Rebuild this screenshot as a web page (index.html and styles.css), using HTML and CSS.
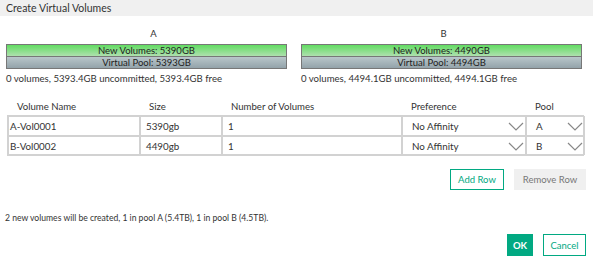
FILE: index.html
```html
<!DOCTYPE html>
<html>
<head>
<meta charset="utf-8">
<link rel="stylesheet" href="styles.css">
</head>
<body>
<div class="dialog">
  <div class="title">Create Virtual Volumes</div>
  <div class="pools">
    <div class="pool">
      <div class="pool-label">A</div>
      <div class="bar">
        <div class="seg seg-new">New Volumes: 5390GB</div>
        <div class="seg seg-pool">Virtual Pool: 5393GB</div>
      </div>
      <div class="pool-info">0 volumes, 5393.4GB uncommitted, 5393.4GB free</div>
    </div>
    <div class="pool pool-b">
      <div class="pool-label">B</div>
      <div class="bar">
        <div class="seg seg-new">New Volumes: 4490GB</div>
        <div class="seg seg-pool">Virtual Pool: 4494GB</div>
      </div>
      <div class="pool-info">0 volumes, 4494.1GB uncommitted, 4494.1GB free</div>
    </div>
  </div>
  <div class="table-head">
    <div>Volume Name</div>
    <div>Size</div>
    <div>Number of Volumes</div>
    <div>Preference</div>
    <div>Pool</div>
  </div>
  <div class="table-body">
    <div class="cell cell-name">A-Vol0001</div>
    <div class="cell">5390gb</div>
    <div class="cell">1</div>
    <div class="cell cell-select">No Affinity<svg class="chev" viewBox="0 0 16 9"><path d="M1 1 L8 8 L15 1"/></svg></div>
    <div class="cell cell-select">A<svg class="chev" viewBox="0 0 16 9"><path d="M1 1 L8 8 L15 1"/></svg></div>
    <div class="cell cell-name">B-Vol0002</div>
    <div class="cell">4490gb</div>
    <div class="cell">1</div>
    <div class="cell cell-select">No Affinity<svg class="chev" viewBox="0 0 16 9"><path d="M1 1 L8 8 L15 1"/></svg></div>
    <div class="cell cell-select">B<svg class="chev" viewBox="0 0 16 9"><path d="M1 1 L8 8 L15 1"/></svg></div>
  </div>
  <div class="row-actions">
    <button class="btn btn-outline btn-add">Add Row</button>
    <button class="btn btn-disabled btn-remove">Remove Row</button>
  </div>
  <div class="summary">2 new volumes will be created, 1 in pool A (5.4TB), 1 in pool B (4.5TB).</div>
  <div class="footer">
    <button class="btn btn-primary btn-ok">OK</button>
    <button class="btn btn-outline btn-cancel">Cancel</button>
  </div>
</div>
</body>
</html>
```
FILE: styles.css
```css
html, body {
  margin: 0;
  padding: 0;
  background: #fff;
}
body {
  font-family: Lato, "Open Sans", sans-serif;
  font-size: 9px;
  color: #333;
}
.title {
  height: 16px;
  line-height: 16px;
  background: #f0f0f0;
  padding-left: 6px;
  font-size: 10.5px;
  color: #333;
}
.pools {
  display: grid;
  grid-template-columns: 295px 281px;
  padding-left: 6px;
  margin-top: 12px;
}
.pool-label {
  height: 12px;
  line-height: 12px;
  text-align: center;
  width: 295px;
  font-size: 9.5px;
}
.pool-b .pool-label {
  width: 285px;
}
.bar {
  width: 279px;
  border: 1px solid #777;
  margin-top: 4px;
}
.seg {
  height: 11px;
  line-height: 11px;
  text-align: center;
  font-size: 9.5px;
  color: #222;
}
.seg-new {
  background: linear-gradient(#62dc62, #aee0ae);
  border-bottom: 1px solid #777;
}
.seg-pool {
  background: linear-gradient(#b9c6ca, #93a3aa);
}
.pool-info {
  margin-top: 4px;
  height: 12px;
  line-height: 12px;
  font-size: 9.6px;
  white-space: nowrap;
}
.table-head {
  display: grid;
  grid-template-columns: 132px 82px 180px 124px 59px;
  margin: 16px 0 0 7px;
  height: 12px;
  line-height: 12px;
  font-size: 9.6px;
}
.table-head div {
  padding-left: 10px;
}
.table-body {
  display: grid;
  grid-template-columns: 132px 82px 180px 124px 59px;
  margin: 2px 0 0 7px;
  width: 577px;
  box-sizing: border-box;
  border: 1px solid #d2d2d2;
  font-size: 9.8px;
}
.cell {
  border: 1px solid #d2d2d2;
  line-height: 18px;
  padding-left: 5px;
  box-sizing: border-box;
  height: 19.5px;
  position: relative;
  white-space: nowrap;
}
.cell-name {
  padding-left: 1px;
}
.cell-select {
  padding-left: 9px;
}
.chev {
  position: absolute;
  right: 1px;
  top: 5px;
  width: 16px;
  height: 9px;
  fill: none;
  stroke: #888;
  stroke-width: 1.2;
}
.row-actions {
  display: flex;
  justify-content: flex-end;
  gap: 10px;
  margin: 13px 7px 0 0;
}
.btn {
  font-family: inherit;
  font-size: 9.5px;
  height: 21px;
  padding: 0 6px;
  box-sizing: border-box;
  border: 1px solid transparent;
  background: none;
  margin: 0;
}
.btn-outline {
  border-color: #01a982;
  color: #01a982;
  background: #fff;
}
.btn-add {
  width: 54px;
}
.btn-disabled {
  background: #f0f0f0;
  color: #777;
  width: 72px;
}
.summary {
  margin: 22px 0 0 5px;
  height: 12px;
  line-height: 12px;
  font-size: 8.6px;
}
.footer {
  display: flex;
  justify-content: flex-end;
  gap: 10px;
  margin: 10px 7px 0 0;
}
.footer .btn {
  height: 22px;
}
.btn-primary {
  background: #01a982;
  color: #fff;
  font-weight: bold;
  width: 26px;
  padding: 0;
}
.btn-cancel {
  width: 43px;
  padding: 0;
}
```
